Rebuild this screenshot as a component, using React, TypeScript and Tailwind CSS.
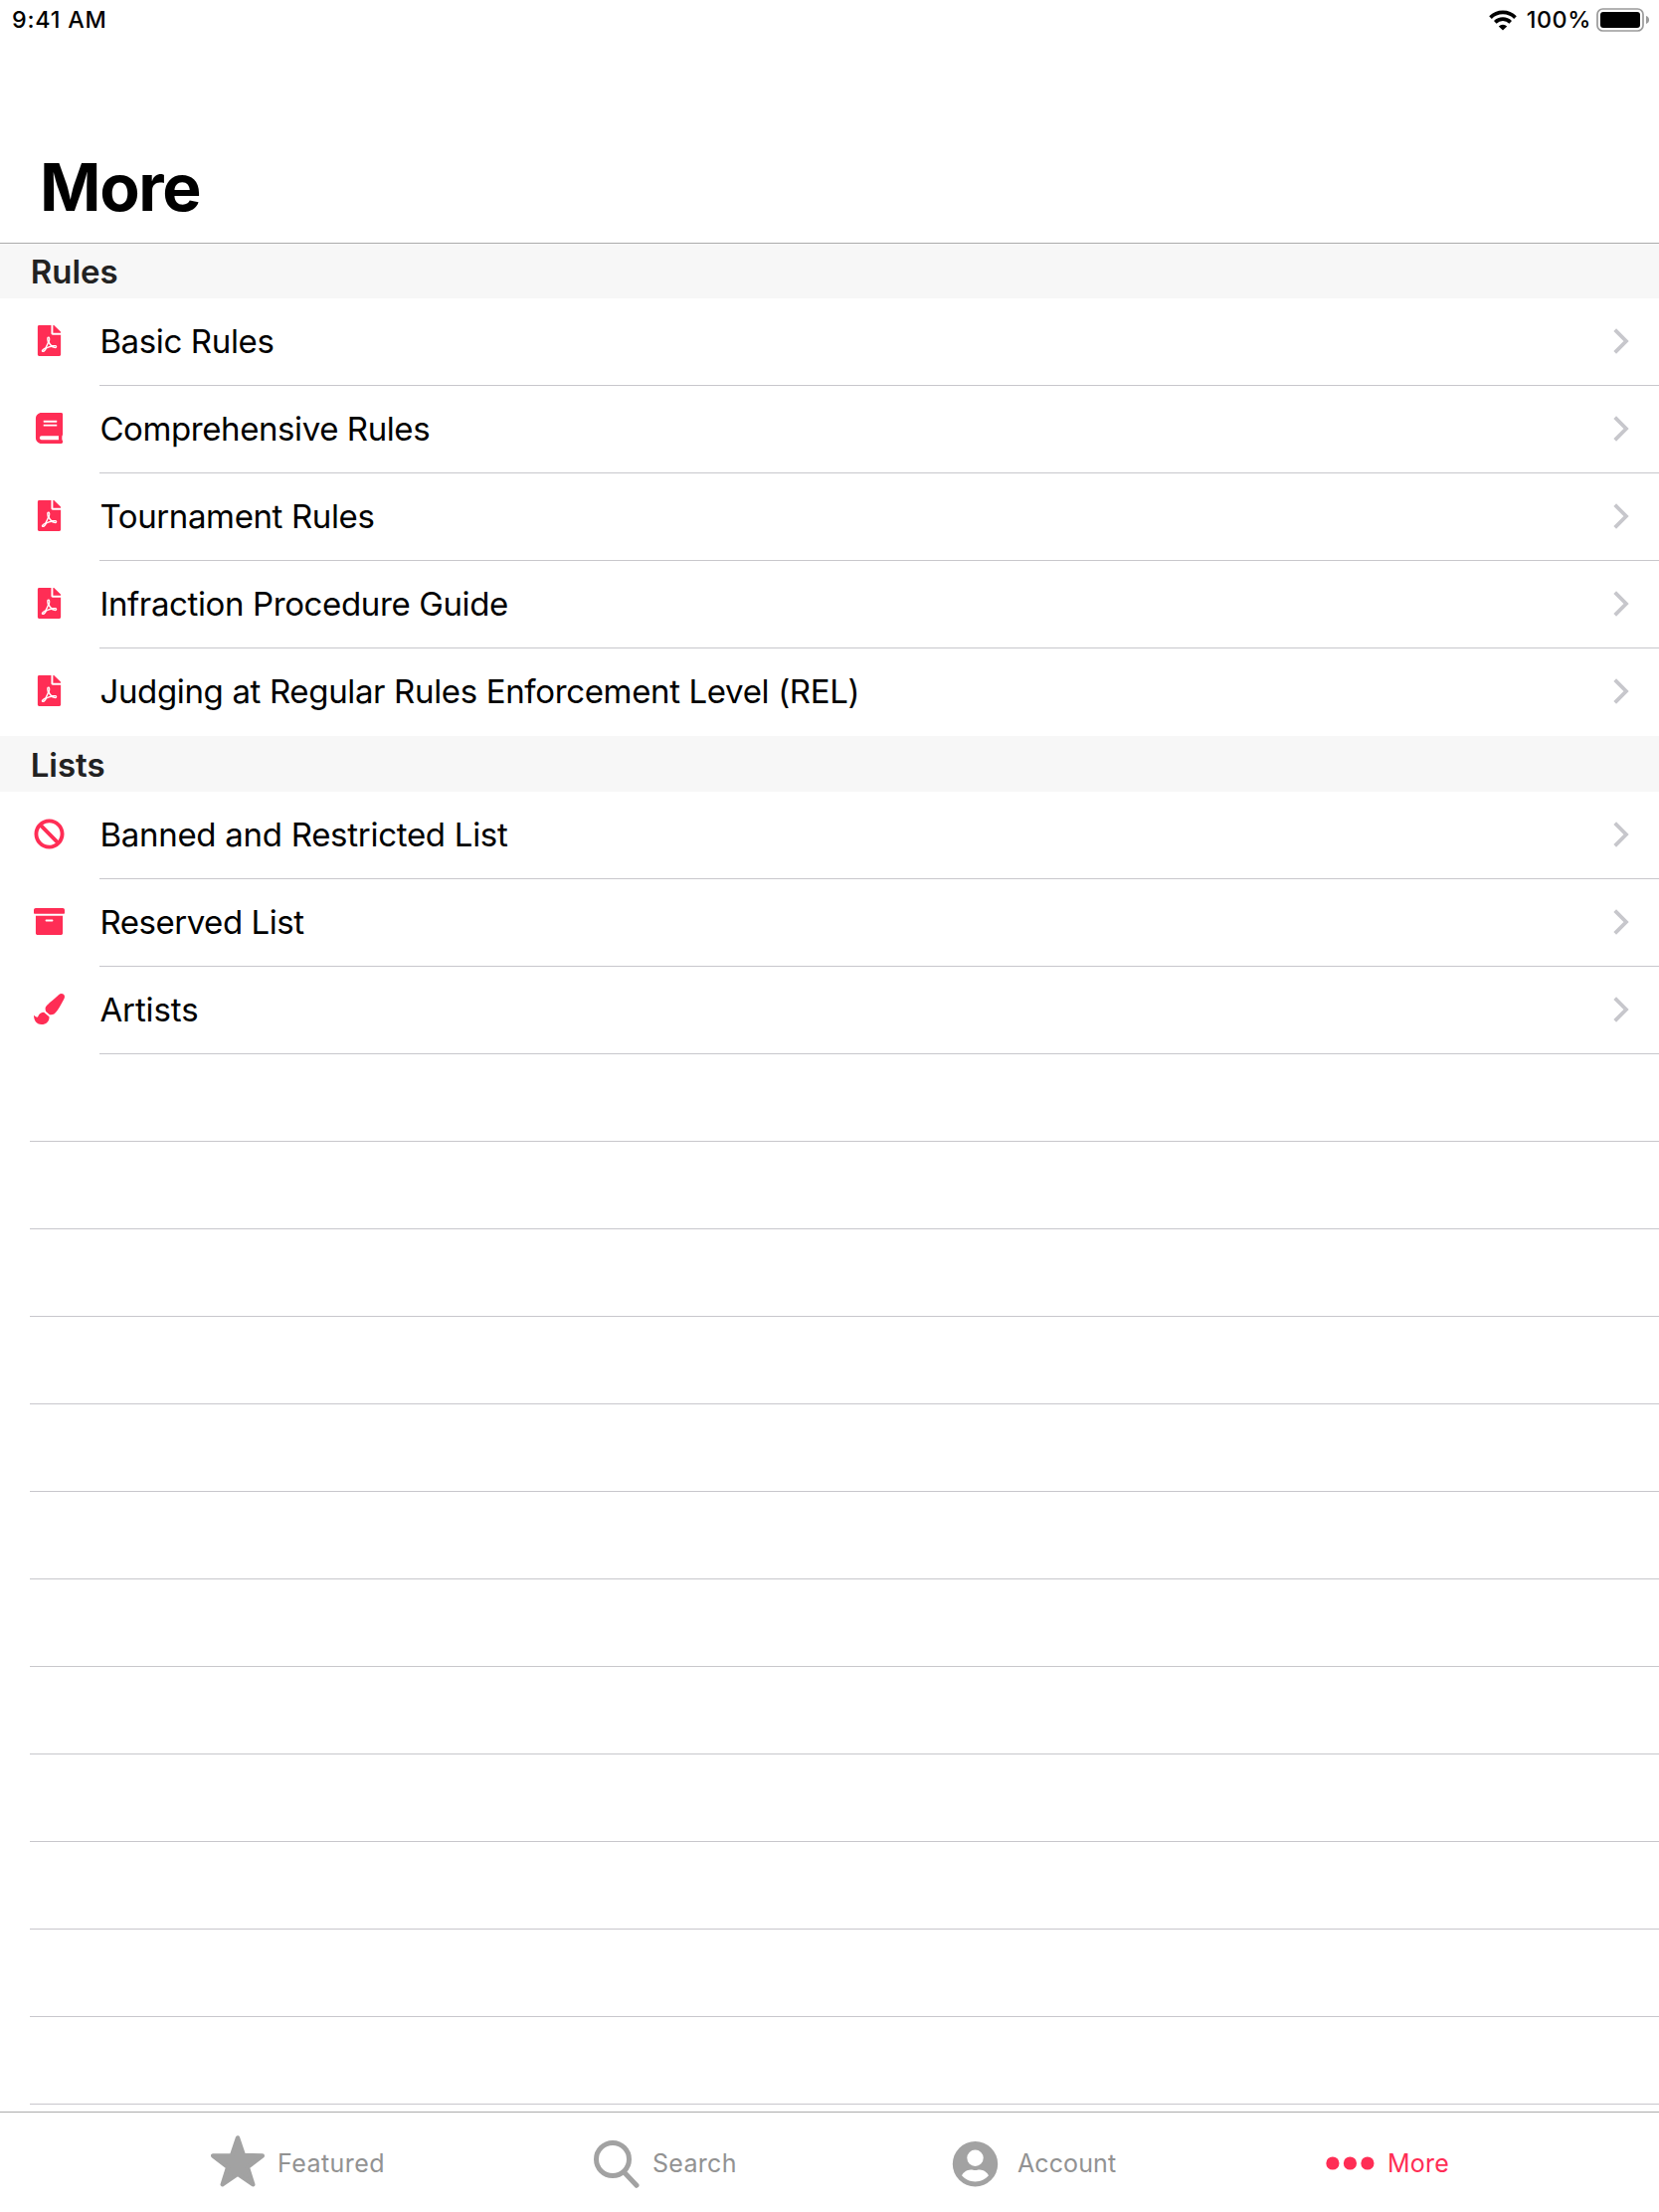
import type { ReactNode } from 'react';
import { FaArchive, FaBan, FaBook, FaFilePdf, FaPaintBrush } from 'react-icons/fa';

type Item = { label: string; icon: ReactNode; tracking: string };

const pdf = <FaFilePdf size={31} />;

const rules: Item[] = [
  { label: 'Basic Rules', icon: pdf, tracking: 'tracking-[-0.366px]' },
  { label: 'Comprehensive Rules', icon: <FaBook size={31} />, tracking: 'tracking-[-0.41px]' },
  { label: 'Tournament Rules', icon: pdf, tracking: 'tracking-[-0.38px]' },
  { label: 'Infraction Procedure Guide', icon: pdf, tracking: 'tracking-[-0.375px]' },
  {
    label: 'Judging at Regular Rules Enforcement Level (REL)',
    icon: pdf,
    tracking: 'tracking-[-0.35px]',
  },
];

const lists: Item[] = [
  { label: 'Banned and Restricted List', icon: <FaBan size={31} />, tracking: 'tracking-[-0.28px]' },
  { label: 'Reserved List', icon: <FaArchive size={31} />, tracking: 'tracking-[-0.46px]' },
  { label: 'Artists', icon: <FaPaintBrush size={31} />, tracking: 'tracking-[-0.1px]' },
];

function WifiIcon() {
  return (
    <svg width="28" height="21" viewBox="0 0 28 21" fill="none" stroke="black" strokeWidth="3.7">
      <path d="M1.5 7.6a17.7 17.7 0 0 1 25 0" />
      <path d="M6.3 12.4a10.9 10.9 0 0 1 15.4 0" />
      <path d="M14 20.6l-4.2-4.2a6 6 0 0 1 8.4 0z" fill="black" stroke="none" />
    </svg>
  );
}

function BatteryIcon() {
  return (
    <svg width="54" height="24" viewBox="0 0 54 24">
      <rect x="1" y="1" width="46" height="22" rx="5.5" fill="none" stroke="#9b9b9b" strokeWidth="1.7" />
      <rect x="4" y="4" width="40" height="16" rx="3" fill="black" />
      <path d="M50 8c2 .6 3.1 2.2 3.1 4s-1.1 3.4-3.1 4z" fill="#9b9b9b" />
    </svg>
  );
}

function Chevron() {
  return (
    <svg width="16" height="26" viewBox="0 0 16 26" fill="none" className="mt-[30px] mr-[30px]">
      <path d="M1.7 1.7L13 13L1.7 24.3" stroke="#c7c7cc" strokeWidth="3.8" />
    </svg>
  );
}

function StarIcon() {
  return (
    <svg width="54" height="52" viewBox="0 0 54 52" fill="currentColor">
      <path
        d="M27 2.4L33 20.2L51.8 20.4L36.8 31.9L42.3 49.3L27 38.7L11.7 49.3L17.2 31.9L2.2 20.4L21 20.2Z"
        stroke="currentColor"
        strokeWidth="4.4"
        strokeLinejoin="round"
      />
    </svg>
  );
}

function SearchIcon() {
  return (
    <svg width="46" height="48" viewBox="0 0 46 48" fill="none" stroke="currentColor">
      <circle cx="19" cy="19" r="16.5" strokeWidth="5" />
      <path d="M31 32.5L43 45.3" strokeWidth="5" strokeLinecap="round" />
    </svg>
  );
}

function AccountIcon() {
  return (
    <svg width="47" height="46" viewBox="0 0 47 46">
      <circle cx="23.5" cy="22.8" r="22.7" fill="currentColor" />
      <circle cx="23.5" cy="16.8" r="8.2" fill="white" />
      <path
        d="M10 34.3C11.5 31 15 28.6 19 28.4C21 28.4 21.5 29 23.5 29S26 28.4 28 28.4C32 28.6 35.5 31 37 34.3C34 38 29 40.5 23.5 40.5S13 38 10 34.3Z"
        fill="white"
      />
    </svg>
  );
}

function DotsIcon() {
  return (
    <svg width="49" height="14" viewBox="0 0 49 14" fill="currentColor">
      <circle cx="6.9" cy="7" r="6.6" />
      <circle cx="24.4" cy="7" r="6.6" />
      <circle cx="41.9" cy="7" r="6.6" />
    </svg>
  );
}

function Row({ item, last }: { item: Item; last?: boolean }) {
  return (
    <li className="flex h-[88px]">
      <div className="flex h-[85px] w-[100px] shrink-0 items-center justify-center pr-px text-[#ff2d55]">
        {item.icon}
      </div>
      <div className={`flex flex-1 justify-between ${last ? '' : 'border-b border-[#c8c7cc]'}`}>
        <span className={`pl-[0.4px] text-[33px] leading-[86px] text-black ${item.tracking}`}>
          {item.label}
        </span>
        <Chevron />
      </div>
    </li>
  );
}

export default function App() {
  return (
    <div className="flex h-[2224px] w-[1668px] flex-col overflow-hidden bg-white font-['Inter',sans-serif]">
      <header className="flex h-[245px] shrink-0 flex-col justify-between border-b border-[#acacac]">
        <div className="flex h-10 items-center justify-between pl-3 text-[23.3px] font-[450]">
          <span className="tracking-[0.8px]">9:41 AM</span>
          <div className="flex items-center pr-[9px]">
            <WifiIcon />
            <span className="ml-[10px] tracking-[0.6px]">100%</span>
            <span className="ml-[5px]">
              <BatteryIcon />
            </span>
          </div>
        </div>
        <h1 className="pb-4 pl-10 text-[66px] leading-[80px] font-bold tracking-[-1.31px]">More</h1>
      </header>

      <main className="min-h-0 flex-1 overflow-hidden">
        <h2 className="h-[55px] bg-[#f7f7f7] pl-[30.7px] text-[33px] leading-[56px] font-semibold text-[#222222]">
          Rules
        </h2>
        <ul>
          {rules.map((item, i) => (
            <Row key={item.label} item={item} last={i === rules.length - 1} />
          ))}
        </ul>
        <h2 className="h-14 bg-[#f7f7f7] pl-[30.7px] text-[33px] leading-[58px] font-semibold text-[#222222]">
          Lists
        </h2>
        <ul>
          {lists.map((item) => (
            <Row key={item.label} item={item} />
          ))}
        </ul>
        {Array.from({ length: 12 }, (_, i) => (
          <div key={i} className="ml-[30px] h-[88px] border-b border-[#c8c7cc]" />
        ))}
      </main>

      <nav className="flex h-[101px] shrink-0 border-t border-[#acacac] pl-[212px] text-[25px] leading-[102px] text-[#929292]">
        <a className="flex w-[385px]">
          <span className="mt-[23px] text-[#a2a2a2]">
            <StarIcon />
          </span>
          <span className="ml-[13px] tracking-[0.45px]">Featured</span>
        </a>
        <a className="flex w-[360px]">
          <span className="mt-[28px] text-[#a2a2a2]">
            <SearchIcon />
          </span>
          <span className="ml-[13px] tracking-[0.3px]">Search</span>
        </a>
        <a className="flex w-[376px]">
          <span className="mt-[29px] text-[#a2a2a2]">
            <AccountIcon />
          </span>
          <span className="ml-[19px] tracking-[0.1px]">Account</span>
        </a>
        <a className="flex text-[#ff2d55]">
          <span className="mt-[44px]">
            <DotsIcon />
          </span>
          <span className="ml-[13px] tracking-[0.2px]">More</span>
        </a>
      </nav>
    </div>
  );
}
